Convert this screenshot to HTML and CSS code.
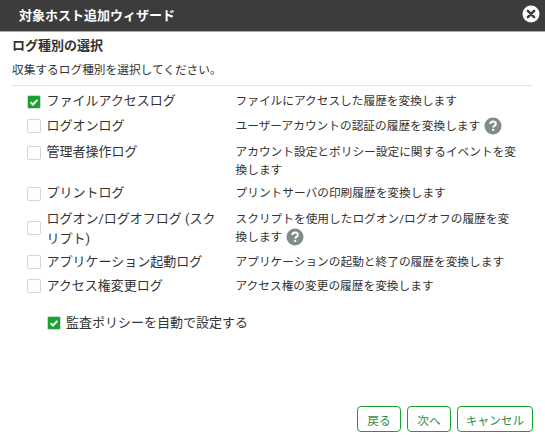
FILE: index.html
```html
<!DOCTYPE html>
<html lang="ja">
<head>
<meta charset="utf-8">
<title>対象ホスト追加ウィザード</title>
<link rel="stylesheet" href="styles.css">
</head>
<body>
<div class="dialog">
  <header class="titlebar">
    <span class="title">対象ホスト追加ウィザード</span>
    <svg class="close" viewBox="0 0 18 18" width="18" height="18"><circle cx="9" cy="9" r="8.5" fill="#fff"/><path d="M5.9 5.9l6.2 6.2M12.1 5.9l-6.2 6.2" stroke="#3c3c3c" stroke-width="2.6" stroke-linecap="round"/></svg>
  </header>
  <main class="body">
    <h2 class="heading">ログ種別の選択</h2>
    <p class="intro">収集するログ種別を選択してください。</p>
    <div class="rows">
      <div class="row r1"><span class="box on"><svg viewBox="0 0 14 14" width="14" height="14"><path d="M3.6 7.2l2.4 2.3 4.4-4.6" fill="none" stroke="#fff" stroke-width="2"/></svg></span><span class="label">ファイルアクセスログ</span><span class="desc">ファイルにアクセスした履歴を変換します</span></div>
      <div class="row r2"><span class="box"></span><span class="label">ログオンログ</span><span class="desc">ユーザーアカウントの認証の履歴を変換します <svg class="help" viewBox="0 0 18 18" width="18" height="18"><circle cx="9" cy="9" r="8.5" fill="#7f8c85"/><path d="M6.3 7.1c0-1.6 1.2-2.5 2.8-2.5s2.7.9 2.7 2.3c0 2-2.6 2-2.6 3.7" fill="none" stroke="#fff" stroke-width="2"/><rect x="8.1" y="11.8" width="2.1" height="2.1" fill="#fff"/></svg></span></div>
      <div class="row r3"><span class="box"></span><span class="label">管理者操作ログ</span><span class="desc">アカウント設定とポリシー設定に関するイベントを変換します</span></div>
      <div class="row r4"><span class="box"></span><span class="label">プリントログ</span><span class="desc">プリントサーバの印刷履歴を変換します</span></div>
      <div class="row r5"><span class="box"></span><span class="label">ログオン/ログオフログ (スクリプト)</span><span class="desc">スクリプトを使用したログオン/ログオフの履歴を変換します <svg class="help" viewBox="0 0 18 18" width="18" height="18"><circle cx="9" cy="9" r="8.5" fill="#7f8c85"/><path d="M6.3 7.1c0-1.6 1.2-2.5 2.8-2.5s2.7.9 2.7 2.3c0 2-2.6 2-2.6 3.7" fill="none" stroke="#fff" stroke-width="2"/><rect x="8.1" y="11.8" width="2.1" height="2.1" fill="#fff"/></svg></span></div>
      <div class="row r6"><span class="box"></span><span class="label">アプリケーション起動ログ</span><span class="desc">アプリケーションの起動と終了の履歴を変換します</span></div>
      <div class="row r7"><span class="box"></span><span class="label">アクセス権変更ログ</span><span class="desc">アクセス権の変更の履歴を変換します</span></div>
    </div>
    <div class="audit"><span class="box on"><svg viewBox="0 0 14 14" width="14" height="14"><path d="M3.6 7.2l2.4 2.3 4.4-4.6" fill="none" stroke="#fff" stroke-width="2"/></svg></span><span class="label">監査ポリシーを自動で設定する</span></div>
  </main>
  <footer class="actions">
    <button class="btn">戻る</button>
    <button class="btn">次へ</button>
    <button class="btn wide">キャンセル</button>
  </footer>
</div>
</body>
</html>
```
FILE: styles.css
```css
* { box-sizing: border-box; }
html, body { margin: 0; height: 100%; }
body { background: #fff; color: #333; font-family: Roboto, "Noto Sans CJK JP", sans-serif; }
.dialog { width: 545px; height: 438px; display: flex; flex-direction: column; }
.titlebar { height: 32px; flex: none; background: #3c3c3c; border-bottom: 1px solid #aaa; padding: 0 5px 2px 19px; display: flex; align-items: center; justify-content: space-between; }
.title { color: #fff; font-size: 13px; font-weight: 700; }
.close { display: block; margin-top: -2px; }
.body { flex: 1; padding: 0 13px 0 12px; }
.heading { margin: 4px 0 0; font-size: 13px; font-weight: 700; line-height: 20px; color: #333; }
.intro { margin: 5px 0 0; font-size: 11.7px; line-height: 18px; padding-bottom: 6px; border-bottom: 1px solid #dde0e6; }
.rows { padding-top: 5px; }
.row { display: grid; grid-template-columns: 19.5px 189px 282px; margin-left: 15px; font-size: 13px; }
.box { width: 14px; height: 14px; border: 1px solid #d5d5d5; border-radius: 2px; background: #fff; display: block; }
.box.on { background: #16a330; border-color: #d5d5d5; }
.box svg { display: block; margin: -1px; }
.label { line-height: 20px; padding-right: 12px; }
.row .box { margin-top: 3px; }
.row.r1 .box, .row.r3 .box, .row.r4 .box { margin-top: 4px; }
.desc { font-size: 11.7px; line-height: 18px; padding-top: 1px; }
.help { vertical-align: -5px; margin-left: 1px; }
.r2 { height: 27px; padding-top: 1px; }
.r1 { height: 24px; }
.r3 { height: 41px; }
.r4 { height: 26px; }
.r5 { height: 43px; }
.row.r5 .box { margin-top: 12px; }
.r6 { height: 24px; }
.r7 { height: 24px; }
.audit { display: flex; align-items: center; gap: 5px; font-size: 13px; margin: 13px 0 0 35px; }
.actions { flex: none; display: flex; justify-content: flex-end; gap: 6px; padding: 0 12px 6px; }
.btn { width: 44px; height: 26px; padding: 0; background: #fff; border: 1px solid #16a330; border-radius: 4px; color: #2f8f4a; font: 11.7px Roboto, "Noto Sans CJK JP", sans-serif; }
.btn.wide { width: 76px; }
```
